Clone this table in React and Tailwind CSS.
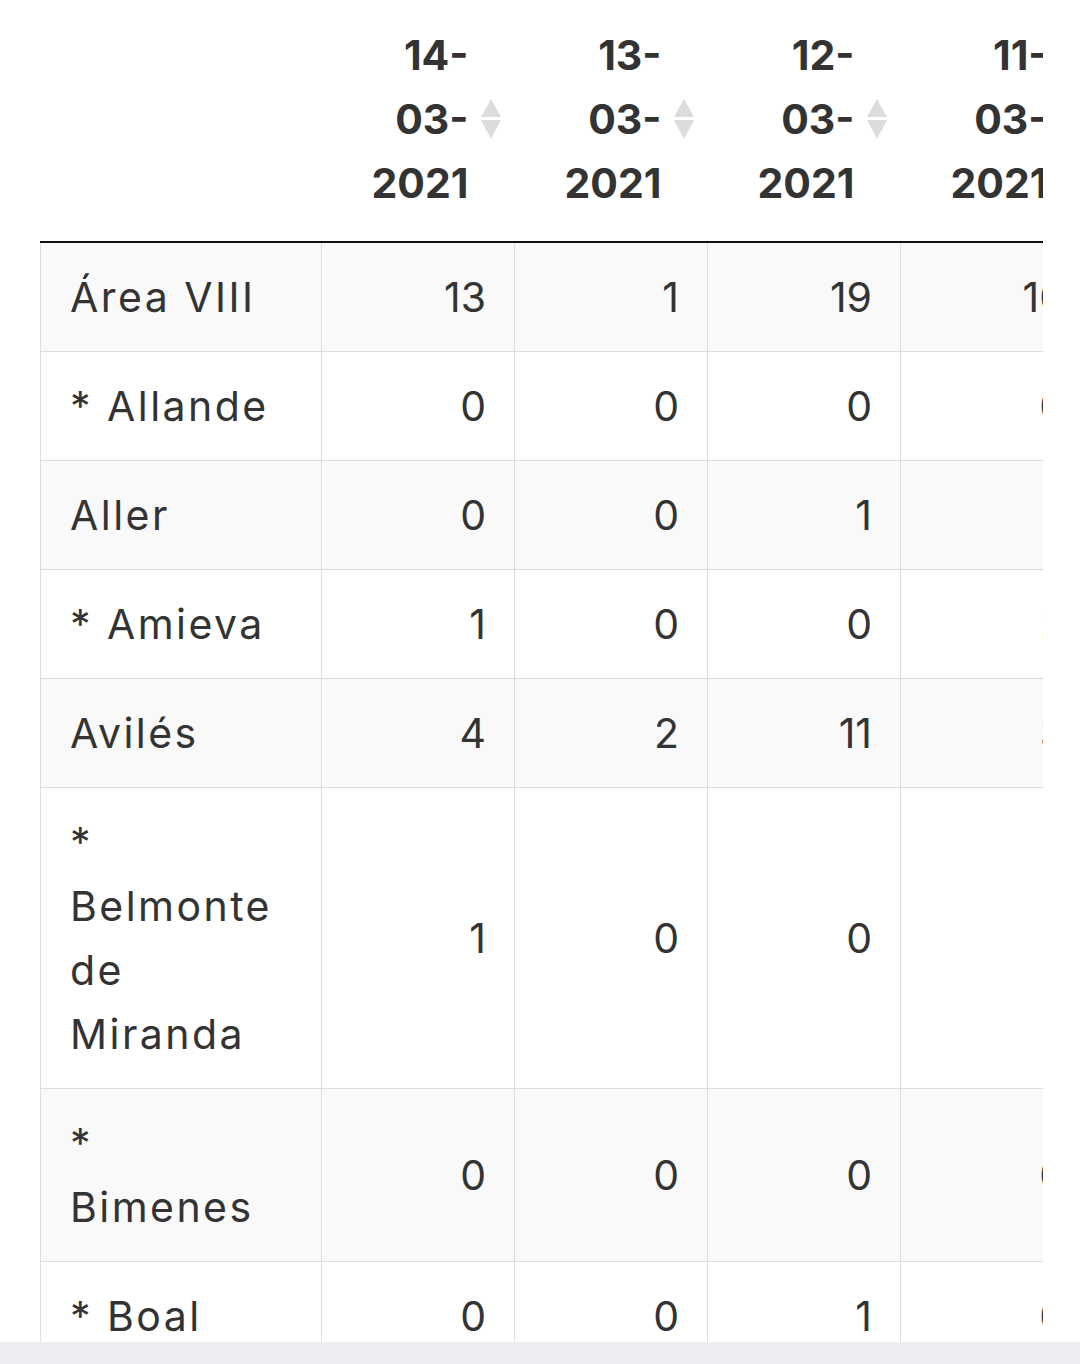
const dates = ["14-03-2021", "13-03-2021", "12-03-2021", "11-03-2021"];

const rows = [
  { name: ["Área VIII"], values: [13, 1, 19, 10] },
  { name: ["* Allande"], values: [0, 0, 0, 0] },
  { name: ["Aller"], values: [0, 0, 1, 1] },
  { name: ["* Amieva"], values: [1, 0, 0, 2] },
  { name: ["Avilés"], values: [4, 2, 11, 3] },
  { name: ["*", "Belmonte", "de", "Miranda"], values: [1, 0, 0, 1] },
  { name: ["*", "Bimenes"], values: [0, 0, 0, 0] },
  { name: ["* Boal"], values: [0, 0, 1, 0] },
];

const SortIcon = () => (
  <svg width="22" height="40" viewBox="0 0 22 40" className="shrink-0">
    <path d="M11 0 L21 18 L1 18 Z" fill="#dcdcdc" />
    <path d="M1 21 L21 21 L11 40 Z" fill="#dcdcdc" />
  </svg>
);

const DateHeader = ({ date }) => {
  const [d, m, y] = date.split("-");
  return (
    <th className="pt-[23px] pb-[26px] pr-[13px] align-bottom font-bold">
      <div className="flex items-center justify-end gap-[11px]">
        <div className="text-right">
          {d}-
          <br />
          {m}-
          <br />
          {y}
        </div>
        <SortIcon />
      </div>
    </th>
  );
};

export default function App() {
  return (
    <div
      className="flex h-[1364px] flex-col bg-white text-[#333]"
      style={{ fontFamily: "Inter, 'Open Sans', sans-serif" }}
    >
      <div className="flex-1 overflow-hidden pl-[40px]">
        <div className="w-[1003px] overflow-hidden">
          <table className="w-[1053px] table-fixed border-collapse text-[41px] leading-[64px]">
            <colgroup>
              <col className="w-[281px]" />
              <col className="w-[193px]" />
              <col className="w-[193px]" />
              <col className="w-[193px]" />
              <col className="w-[193px]" />
            </colgroup>
            <thead>
              <tr className="border-b-2 border-[#111]">
                <th></th>
                {dates.map((date) => (
                  <DateHeader key={date} date={date} />
                ))}
              </tr>
            </thead>
            <tbody>
              {rows.map((row, i) => (
                <tr
                  key={i}
                  className={i % 2 === 0 ? "bg-[#f9f9f9]" : "bg-white"}
                >
                  <td className="border border-[#dddddd] py-[22px] pl-[29px] pr-[10px] align-middle whitespace-nowrap tracking-[0.06em]">
                    {row.name.map((line, j) => (
                      <div key={j}>{line}</div>
                    ))}
                  </td>
                  {row.values.map((v, j) => (
                    <td
                      key={j}
                      className="border border-[#dddddd] py-[22px] pr-[28px] text-right align-middle"
                    >
                      {v}
                    </td>
                  ))}
                </tr>
              ))}
            </tbody>
          </table>
        </div>
      </div>
      <div className="h-[22px] bg-[#eeeef2]"></div>
    </div>
  );
}
